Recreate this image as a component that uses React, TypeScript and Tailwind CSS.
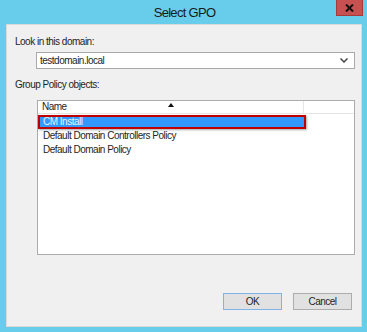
import React from 'react';

const font = { fontFamily: '"Liberation Sans", Arial, sans-serif' };

const rows = ['CM_Install', 'Default Domain Controllers Policy', 'Default Domain Policy'];

const App: React.FC = () => {
  return (
    <div
      className="w-[367px] h-[332px] bg-[#68cdea] flex flex-col overflow-hidden"
      style={font}
    >
      {/* title bar */}
      <div className="h-[23px] relative flex items-center justify-center">
        <span className="text-[13px] tracking-[-0.7px] text-[#1a1a1a] mt-[2px] ml-[2px]">Select GPO</span>
        <div className="absolute right-[4px] top-0 w-[27px] h-[16px] bg-[#c75050] border border-[#a53a3a] border-t-0 flex items-center justify-center">
          <svg width="9" height="8" viewBox="0 0 9 8">
            <path d="M1 0.5 L8 7.5 M8 0.5 L1 7.5" stroke="#111" strokeWidth="2" />
          </svg>
        </div>
      </div>

      {/* client area */}
      <div className="ml-[6px] mr-[5px] mt-[1px] h-[303px] bg-[#f0f0f0] border border-[#d9d9d9] flex flex-col text-[10px] tracking-[-0.5px] text-[#1e1e1e]">
        <div className="ml-[8px] mt-[11px] leading-[12px]">Look in this domain:</div>
        <div className="ml-[29px] mt-[4px] w-[319px] h-[17px] bg-white border border-[#a9a9a9] flex items-center justify-between pl-[3px] pr-[6px]">
          <span className="leading-[12px]">testdomain.local</span>
          <svg width="8" height="5" viewBox="0 0 8 5">
            <path d="M0.5 0.5 L4 4 L7.5 0.5" stroke="#444" strokeWidth="1.5" fill="none" />
          </svg>
        </div>
        <div className="ml-[8px] mt-[10px] leading-[12px]">Group Policy objects:</div>

        <div className="ml-[30px] mt-[9px] w-[318px] h-[155px] bg-white border border-[#acacac] flex flex-col">
          <div className="h-[13px] flex border-b border-[#e5e5e5]">
            <div className="w-[266px] relative border-r border-[#e5e5e5] pl-[4px] leading-[12px]">
              Name
              <svg className="absolute left-[130px] top-[2px]" width="6" height="4" viewBox="0 0 6 4">
                <path d="M0 4 L3 0 L6 4 Z" fill="#111" />
              </svg>
            </div>
            <div className="flex-1" />
          </div>
          <div className="mt-[1px] flex flex-col">
            {rows.map((r, i) =>
              i === 0 ? (
                <div
                  key={r}
                  className="w-[268px] h-[14px] bg-[#3399ff] border-2 border-[#c00000] shadow-[1px_1px_2px_rgba(0,0,0,0.35)] text-[#e8f3ff] pl-[3px] leading-[10px]"
                >
                  {r.replace('_', '  ')}
                </div>
              ) : (
                <div key={r} className="h-[14px] pl-[5px] leading-[14px]">
                  {r}
                </div>
              )
            )}
          </div>
        </div>

        <div className="flex-1" />
        <div className="flex justify-end gap-[11px] mr-[9px] mb-[16px]">
          <button className="w-[59px] h-[17px] bg-[#e1e1e1] border border-[#7eb4ea] text-[10px] tracking-[-0.5px] leading-[12px]">
            OK
          </button>
          <button className="w-[59px] h-[17px] bg-[#e1e1e1] border border-[#adadad] text-[10px] tracking-[-0.5px] leading-[12px]">
            Cancel
          </button>
        </div>
      </div>
    </div>
  );
};

export default App;
